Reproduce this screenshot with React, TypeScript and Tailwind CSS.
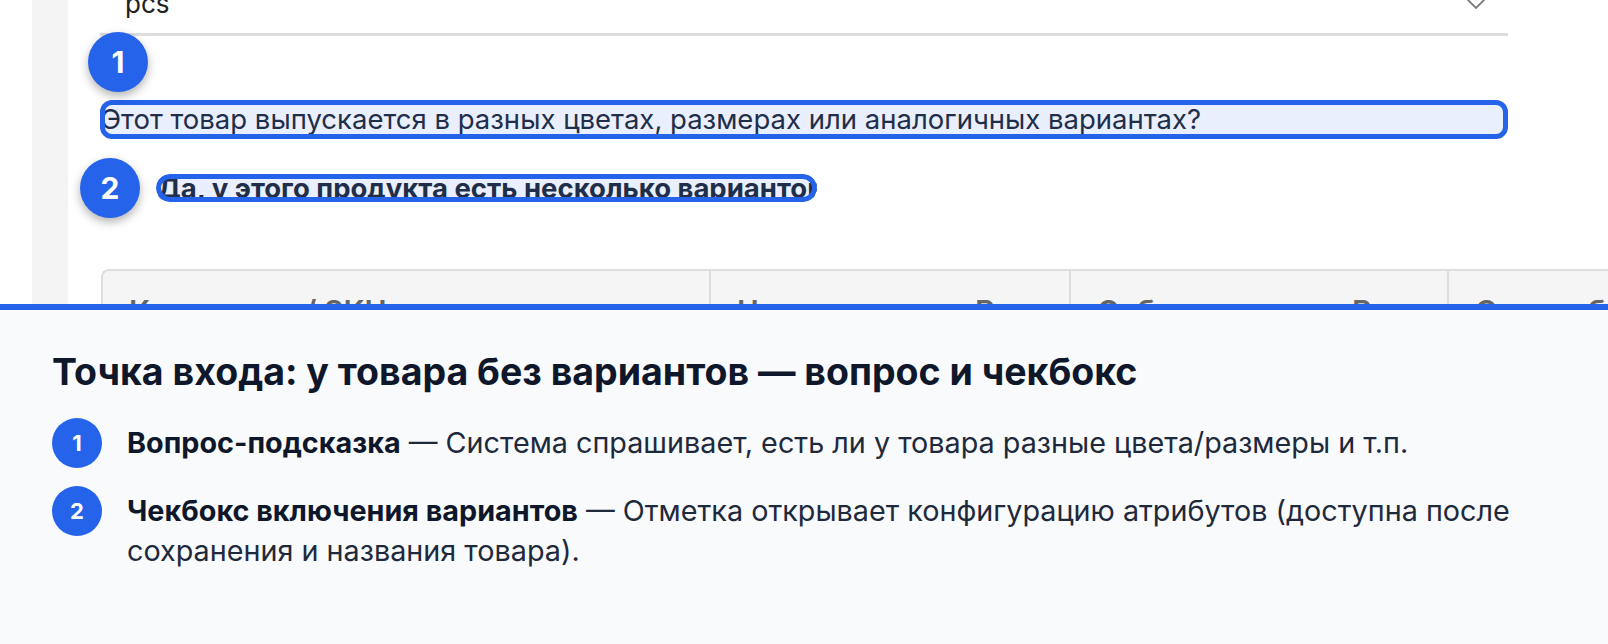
import React from "react"

const columns = [
  { title: "Код товара / SKU", width: "w-[606px]" },
  { title: "Цена продажи, ₽", width: "w-[360px]" },
  { title: "Себестоимость, ₽", width: "w-[378px]" },
  { title: "Сумма брутто", width: "flex-1" },
]

const notes = [
  {
    n: 1,
    title: "Вопрос-подсказка",
    text: "Система спрашивает, есть ли у товара разные цвета/размеры и т.п.",
  },
  {
    n: 2,
    title: "Чекбокс включения вариантов",
    text: "Отметка открывает конфигурацию атрибутов (доступна после сохранения и названия товара).",
  },
]

function Marker({ n, className }: { n: number; className: string }) {
  return (
    <div
      className={`absolute flex h-[60px] w-[60px] items-center justify-center rounded-full bg-[#2563eb] text-[30px] font-bold text-white shadow-[0_4px_10px_rgba(0,0,0,0.3)] ${className}`}
    >
      {n}
    </div>
  )
}

export default function App() {
  return (
    <div className="relative h-[644px] w-[1608px] overflow-hidden bg-white font-['Inter',sans-serif]">
      {/* page being annotated */}
      <div className="flex h-[304px] overflow-hidden">
        <div className="w-[32px] shrink-0 bg-white" />
        <div className="w-[36px] shrink-0 bg-[#f4f4f4]" />
        <div className="flex flex-1 flex-col pl-[32px]">
          <div className="relative flex h-[36px] w-[1408px] shrink-0 items-start border-b-[3px] border-[#dddddd]">
            <div className="-mt-[9px] pl-[25px] text-[26px] leading-[26px] text-[#222222]">pcs</div>
            <svg
              className="absolute left-[1365px] top-[-3px]"
              width="22"
              height="13"
              viewBox="0 0 22 13"
              fill="none"
              stroke="#7a7a7a"
              strokeWidth="1.8"
            >
              <polyline points="1,1 11,11 21,1" />
            </svg>
          </div>

          <div className="relative mt-[64px] h-[39px] w-[1408px] shrink-0 whitespace-nowrap pl-[1px] text-[27.5px] leading-[39px] text-[#1f2937]">
            Этот товар выпускается в разных цветах, размерах или аналогичных вариантах?
            <div className="absolute inset-0 rounded-[12px] border-[5px] border-[#2563eb] bg-[#2563eb]/10" />
          </div>

          <div className="relative ml-[56px] mt-[35px] h-[28px] w-[661px] shrink-0 overflow-hidden whitespace-nowrap rounded-[14px] pl-[1px] text-[27.5px] font-bold leading-[28px] text-[#1f2937]">
            <span className="absolute bottom-[1px] left-0 h-[6px] w-[6px] bg-[#8a8a8a]" />
            Да, у этого продукта есть несколько вариантов
            <div className="absolute inset-0 rounded-[14px] border-[5px] border-[#2563eb] bg-[#2563eb]/10" />
          </div>

          <div className="ml-[1px] mt-[67px] flex h-[60px] w-[1600px] shrink-0 rounded-tl-[8px] border-l-2 border-t-2 border-[#dddddd] bg-[#f5f5f5]">
            {columns.map((c, i) => (
              <div
                key={c.title}
                className={`${c.width} ${i > 0 ? "border-l-2 border-[#dddddd]" : ""} whitespace-nowrap pl-[26px] pt-[25px] text-[30px] font-semibold leading-[30px] text-[#666666]`}
              >
                {c.title}
              </div>
            ))}
          </div>
        </div>
      </div>

      <Marker n={1} className="left-[88px] top-[32px]" />
      <Marker n={2} className="left-[80px] top-[158px]" />

      {/* explanation panel */}
      <div className="h-[340px] border-t-[6px] border-[#2563eb] bg-[#f8fafc] pl-[52px] pr-[20px] pt-[39px]">
        <h2 className="text-[37.5px] font-bold leading-[46px] text-[#0f172a]">
          Точка входа: у товара без вариантов — вопрос и чекбокс
        </h2>
        <div className="mt-[23px] space-y-[18px]">
          {notes.map((item) => (
            <div key={item.n} className="flex gap-[25px]">
              <div className="flex h-[50px] w-[50px] shrink-0 items-center justify-center rounded-full bg-[#2563eb] text-[22px] font-bold text-white">
                {item.n}
              </div>
              <p className="mt-[5px] text-[28.75px] leading-[40px] text-[#1e293b]">
                <span className="font-bold text-[#0f172a]">{item.title}</span> — {item.text}
              </p>
            </div>
          ))}
        </div>
      </div>
    </div>
  )
}
